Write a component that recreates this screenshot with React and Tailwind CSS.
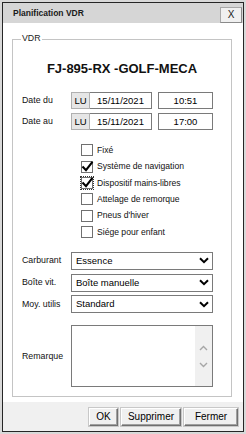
import React from "react";

const font = { fontFamily: '"Liberation Sans", Arial, sans-serif' };

function Check({ checked, focus }) {
  return (
    <div className={"relative w-[12px] h-[12px] shrink-0 " + (focus ? "outline outline-1 outline-dotted outline-[#333] outline-offset-[0px]" : "")}>
      <div className="absolute inset-0 border border-[#707070] bg-white" />
      {checked && (
        <svg className="absolute left-0 top-0 overflow-visible" width="12" height="12" viewBox="0 0 12 12">
          <path d="M2.2 6.2 L5 9.2 L10.8 1.6" fill="none" stroke="#000" strokeWidth="2.1" strokeLinecap="square" />
        </svg>
      )}
    </div>
  );
}

function Chevron() {
  return (
    <svg width="10" height="7" viewBox="0 0 10 7" className="shrink-0">
      <path d="M1 1.2 L5 5.2 L9 1.2" fill="none" stroke="#000" strokeWidth="2" />
    </svg>
  );
}

function SelectRow({ label, value }) {
  return (
    <div className="flex items-center h-[18px]">
      <div className="w-[58px] pl-[9px] text-[8.8px] text-[#111] leading-none">{label}</div>
      <div className="w-[142px] h-[18px] border border-[#7a7a7a] bg-white flex items-center justify-between pl-[4px] pr-[3px]">
        <span className="text-[9.5px] text-black leading-none">{value}</span>
        <Chevron />
      </div>
    </div>
  );
}

function DateRow({ label, date, time }) {
  return (
    <div className="flex items-center h-[17px]">
      <div className="w-[58px] pl-[9px] text-[8.8px] text-[#111] leading-none">{label}</div>
      <div className="w-[19px] h-[17px] border border-[#b0b0b0] bg-[#e6e6e6] flex items-center justify-center text-[9.5px] text-black leading-none">LU</div>
      <div className="w-[62px] h-[17px] border border-l-0 border-[#7a7a7a] bg-white flex items-center justify-center text-[9.5px] text-black leading-none">{date}</div>
      <div className="w-[55px] ml-[6px] h-[17px] border border-[#7a7a7a] bg-white flex items-center justify-center text-[9.5px] text-black leading-none">{time}</div>
    </div>
  );
}

function CheckRow({ label, checked, focus }) {
  return (
    <div className="flex items-center h-[16.4px] pl-[68px]">
      <Check checked={checked} focus={focus} />
      <span className="ml-[4px] text-[8.6px] text-[#111] leading-none">{label}</span>
    </div>
  );
}

function Btn({ children, w }) {
  return (
    <div className={"h-[18px] bg-[#f0f0f0] border border-t-white border-l-white border-r-[#707070] border-b-[#707070] shadow-[inset_-1px_-1px_0_#a0a0a0,0_0_0_1px_#c8c8c8] flex items-center justify-center text-[10px] text-black leading-none " + w}>
      {children}
    </div>
  );
}

export default function App() {
  return (
    <div className="w-[246px] h-[434px] bg-[#d9d9d9] pt-[2px] pl-[2px]" style={font}>
      <div className="w-[242px] h-[430px] border border-[#262626] flex flex-col bg-white">
        <div className="h-[20px] bg-[#d6d6d6] flex items-center justify-between pl-[10px] pr-[1px] shrink-0">
          <span className="text-[8.5px] font-bold text-[#1a1a1a] leading-none">Planification VDR</span>
          <div className="w-[22px] h-[16px] mt-[4px] bg-[#f0f0f0] border border-[#a8a8a8] border-r-[#8a8a8a] border-b-[#8a8a8a] flex items-center justify-center text-[10px] text-[#222] leading-none">X</div>
        </div>
        <div className="flex-1 pl-[9px] pr-[9px] pt-[16px]">
          <div className="relative w-[220px] border border-[#c4c4c4] pb-[9px]">
            <span className="absolute -top-[6px] left-[8px] bg-white px-[1px] text-[8.8px] text-[#222] leading-none">VDR</span>
            <div className="mt-[20px] h-[16px] flex items-center justify-center text-[13px] font-bold text-[#111] leading-none">FJ-895-RX -GOLF-MECA</div>
            <div className="mt-[16px] flex flex-col gap-[4px]">
              <DateRow label="Date du" date="15/11/2021" time="10:51" />
              <DateRow label="Date au" date="15/11/2021" time="17:00" />
            </div>
            <div className="mt-[12px] flex flex-col">
              <CheckRow label="Fixé" />
              <CheckRow label="Système de navigation" checked />
              <CheckRow label="Dispositif mains-libres" checked focus />
              <CheckRow label="Attelage de remorque" />
              <CheckRow label="Pneus d'hiver" />
              <CheckRow label="Siége pour enfant" />
            </div>
            <div className="mt-[11.5px] flex flex-col gap-[3.7px]">
              <SelectRow label="Carburant" value="Essence" />
              <SelectRow label="Boîte vit." value="Boîte manuelle" />
              <SelectRow label="Moy. utilis" value="Standard" />
            </div>
            <div className="mt-[12px] flex items-center">
              <div className="w-[58px] pl-[9px] text-[8.8px] text-[#111] leading-none">Remarque</div>
              <div className="w-[142px] h-[62px] border border-[#7a7a7a] bg-white flex justify-end">
                <div className="w-[17px] h-full bg-[#f0f0f0] flex flex-col items-center justify-center gap-[11px]">
                  <svg width="9" height="6" viewBox="0 0 9 6"><path d="M1 5 L4.5 1.5 L8 5" fill="none" stroke="#a6a6a6" strokeWidth="1.4" /></svg>
                  <svg width="9" height="6" viewBox="0 0 9 6"><path d="M1 1 L4.5 4.5 L8 1" fill="none" stroke="#a6a6a6" strokeWidth="1.4" /></svg>
                </div>
              </div>
            </div>
          </div>
        </div>
        <div className="h-[29px] bg-[#f0f0f0] flex items-start justify-end gap-[3px] pt-[6px] pr-[5px] shrink-0">
          <Btn w="w-[29px]">OK</Btn>
          <Btn w="w-[60px]">Supprimer</Btn>
          <Btn w="w-[54px]">Fermer</Btn>
        </div>
      </div>
    </div>
  );
}
